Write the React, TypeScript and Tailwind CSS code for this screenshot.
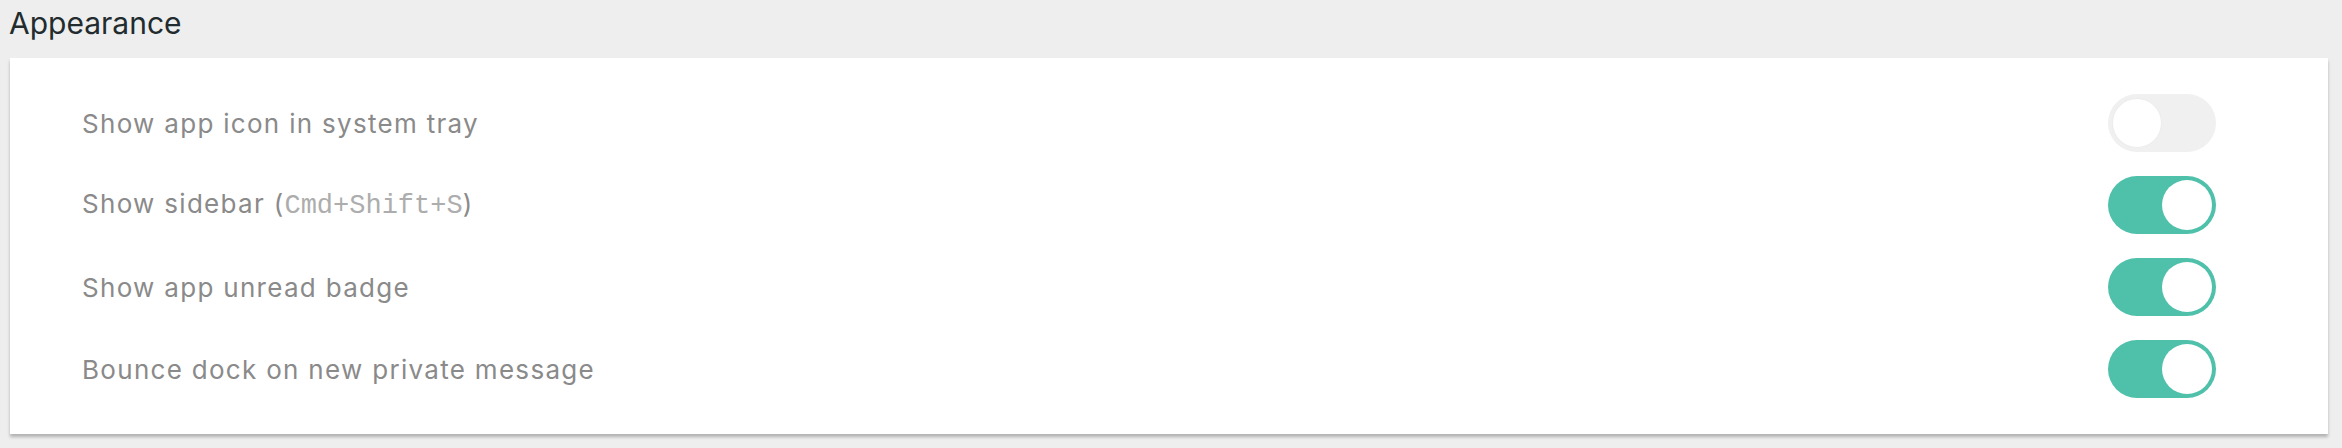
const rows = [
  { label: 'Show app icon in system tray', on: false },
  { label: 'Show sidebar', shortcut: 'Cmd+Shift+S', on: true },
  { label: 'Show app unread badge', on: true },
  { label: 'Bounce dock on new private message', on: true },
]

function Toggle({ on }: { on: boolean }) {
  return (
    <div
      className={
        on
          ? 'flex h-[58px] w-[108px] items-center justify-end rounded-full bg-[#4fc0aa] px-[4px]'
          : 'flex h-[58px] w-[108px] items-center justify-start rounded-full bg-[#f0f0f0] px-[4px]'
      }
    >
      <div
        className={
          on
            ? 'h-[50px] w-[50px] rounded-full bg-white'
            : 'h-[50px] w-[50px] rounded-full border border-[#ececec] bg-white'
        }
      />
    </div>
  )
}

export default function App() {
  return (
    <div className="h-[448px] w-full bg-[#eeeeee] font-['Inter',sans-serif]">
      <h2 className="pl-[9px] pt-[2px] text-[30px] leading-[42px] text-[#222b2e]">Appearance</h2>
      <div className="ml-[10px] mr-[14px] mt-[14px] bg-white py-[24px] shadow-[0_3px_3px_rgba(0,0,0,0.25)]">
        {rows.map((row) => (
          <div key={row.label} className="flex h-[82px] items-center justify-between pl-[72px] pr-[112px]">
            <span className="text-[26px] tracking-[1.3px] text-[#8a8a8a]">
              {row.label}
              {row.shortcut && (
                <>
                  {' '}(
                  <span className="font-['Liberation_Mono',monospace] text-[27px] font-light tracking-normal text-[#adadad]">
                    {row.shortcut}
                  </span>
                  )
                </>
              )}
            </span>
            <Toggle on={row.on} />
          </div>
        ))}
      </div>
    </div>
  )
}
